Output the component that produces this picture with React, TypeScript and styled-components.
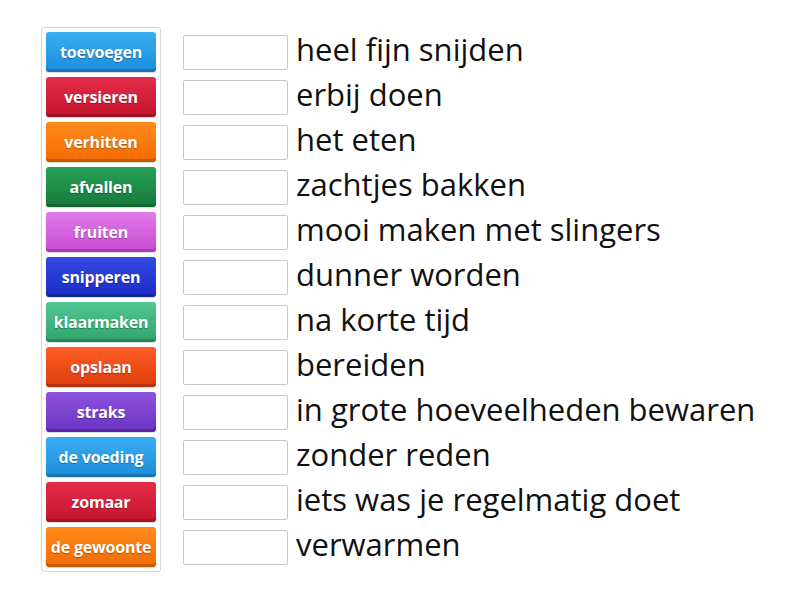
import * as React from "react";
import styled, { createGlobalStyle } from "styled-components";

const GlobalStyle = createGlobalStyle`
  html, body {
    margin: 0;
    padding: 0;
    background: #ffffff;
    font-family: "Open Sans", "Noto Sans", sans-serif;
  }
`;

const palette: Record<string, [string, string]> = {
  blue: ["#3aaef0", "#1c8ddc"],
  red: ["#e42c47", "#c5142f"],
  orange: ["#ff8a1c", "#f26c00"],
  green: ["#27a057", "#167a3c"],
  pink: ["#e07ae8", "#c74ad2"],
  navy: ["#3149e2", "#1b2dc6"],
  mint: ["#52c690", "#2ea56b"],
  flame: ["#ff5c26", "#dd3e0c"],
  purple: ["#8d52de", "#6b33c2"],
};

const words: { label: string; color: string }[] = [
  { label: "toevoegen", color: "blue" },
  { label: "versieren", color: "red" },
  { label: "verhitten", color: "orange" },
  { label: "afvallen", color: "green" },
  { label: "fruiten", color: "pink" },
  { label: "snipperen", color: "navy" },
  { label: "klaarmaken", color: "mint" },
  { label: "opslaan", color: "flame" },
  { label: "straks", color: "purple" },
  { label: "de voeding", color: "blue" },
  { label: "zomaar", color: "red" },
  { label: "de gewoonte", color: "orange" },
];

const meanings = [
  "heel fijn snijden",
  "erbij doen",
  "het eten",
  "zachtjes bakken",
  "mooi maken met slingers",
  "dunner worden",
  "na korte tijd",
  "bereiden",
  "in grote hoeveelheden bewaren",
  "zonder reden",
  "iets was je regelmatig doet",
  "verwarmen",
];

const Page = styled.div`
  display: flex;
  align-items: flex-start;
  gap: 22px;
  padding: 27px 0 0 41px;
`;

const TilePanel = styled.div`
  width: 110px;
  padding: 4px;
  border: 1px solid #d4d4d4;
  border-radius: 3px;
  display: flex;
  flex-direction: column;
  gap: 5px;
`;

const Tile = styled.div<{ $tone: string }>`
  height: 40px;
  border-radius: 3px;
  display: flex;
  align-items: center;
  justify-content: center;
  color: #fff;
  font-size: 16px;
  font-weight: 700;
  white-space: nowrap;
  letter-spacing: -0.2px;
  text-shadow: 0 1px 1px rgba(0, 0, 0, 0.3);
  background: linear-gradient(
    ${(p) => palette[p.$tone][0]},
    ${(p) => palette[p.$tone][1]}
  );
  box-shadow: inset 0 -3px 0 rgba(0, 0, 0, 0.18),
    0 1px 1px rgba(0, 0, 0, 0.15);
`;

const Answers = styled.div`
  display: flex;
  flex-direction: column;
  gap: 5px;
  padding-top: 5px;
`;

const Row = styled.div`
  height: 40px;
  display: flex;
  align-items: center;
  gap: 8px;
`;

const Slot = styled.div`
  width: 103px;
  height: 33px;
  border: 1px solid #c8c8c8;
  border-radius: 2px;
  background: #fff;
  flex: none;
`;

const Meaning = styled.span`
  font-size: 31px;
  color: #111;
  white-space: nowrap;
  line-height: 1;
  margin-top: -6px;
`;

export default function App() {
  return (
    <>
      <GlobalStyle />
      <Page>
        <TilePanel>
          {words.map((w) => (
            <Tile key={w.label} $tone={w.color}>
              {w.label}
            </Tile>
          ))}
        </TilePanel>
        <Answers>
          {meanings.map((m) => (
            <Row key={m}>
              <Slot />
              <Meaning>{m}</Meaning>
            </Row>
          ))}
        </Answers>
      </Page>
    </>
  );
}
